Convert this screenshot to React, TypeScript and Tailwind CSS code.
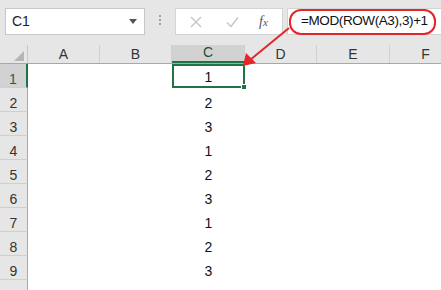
const cols = [
  { key: 'A', w: 'w-[72px]' },
  { key: 'B', w: 'w-[72px]' },
  { key: 'C', w: 'w-[73px]' },
  { key: 'D', w: 'w-[72px]' },
  { key: 'E', w: 'w-[73px]' },
  { key: 'F', w: 'w-[72px]' },
]

const values = [1, 2, 3, 1, 2, 3, 1, 2, 3, null]

function FormulaBar() {
  return (
    <div className="flex h-[45px] items-start bg-[#e6e6e6] pt-[8px]">
      <div className="ml-[5px] flex h-[27px] w-[140px] items-center justify-between border border-[#c6c6c6] bg-white pl-[6px] pr-[7px]">
        <span className="text-[14px] text-[#222]">C1</span>
        <svg width="8" height="5" viewBox="0 0 8 5">
          <path d="M0 0h8L4 5z" fill="#555" />
        </svg>
      </div>
      <div className="ml-[14px] mt-[7px] flex flex-col gap-[2px]">
        <span className="size-[2px] bg-[#a0a0a0]" />
        <span className="size-[2px] bg-[#a0a0a0]" />
        <span className="size-[2px] bg-[#a0a0a0]" />
      </div>
      <div className="ml-[14px] flex h-[27px] w-[108px] items-center border border-[#d4d4d4] bg-white">
        <svg className="ml-[14px]" width="12" height="12" viewBox="0 0 12 12">
          <path d="M1 1l10 10M11 1L1 11" stroke="#c4c4c4" strokeWidth="1.4" />
        </svg>
        <svg className="ml-[24px]" width="13" height="12" viewBox="0 0 13 12">
          <path d="M1 6.5l4 4L12 1.5" stroke="#c4c4c4" strokeWidth="1.4" fill="none" />
        </svg>
        <span className="ml-[20px] font-['Liberation_Serif',serif] text-[14px] italic text-[#555]">
          f<span className="text-[11px]">x</span>
        </span>
      </div>
      <div className="ml-[4px] flex h-[27px] flex-1 items-center border-y border-l border-[#d4d4d4] bg-white pl-[1px]">
        <div className="flex h-[26px] w-[147px] items-center rounded-[12px] border-2 border-[#e3262b] pl-[10px]">
          <span className="text-[13.5px] tracking-[-0.4px] text-[#111]">=MOD(ROW(A3),3)+1</span>
        </div>
      </div>
    </div>
  )
}

function HeaderRow() {
  return (
    <div className="flex h-[19px] border-b border-[#a8a8a8] bg-[#e6e6e6]">
      <div className="relative w-[28px] shrink-0 border-r border-[#c8c8c8]">
        <svg className="absolute bottom-[2px] right-[3px]" width="10" height="10" viewBox="0 0 10 10">
          <path d="M10 0v10H0z" fill="#b5b5b5" />
        </svg>
      </div>
      {cols.map((c) => (
        <div
          key={c.key}
          className={`${c.w} flex shrink-0 items-end justify-center border-r border-[#d0d0d0] pb-[1px] text-[14px] leading-[16px] ${
            c.key === 'C'
              ? 'border-b-2 border-b-[#217346] bg-[#d2d2d2] text-[#1f4f36]'
              : 'text-[#333]'
          }`}
        >
          {c.key}
        </div>
      ))}
    </div>
  )
}

function Row({ n, value }: { n: number; value: number | null }) {
  const active = n === 1
  return (
    <div className="flex h-[24px]">
      <div
        className={`flex w-[28px] shrink-0 items-end justify-center border-b border-[#cfcfcf] pb-[1px] text-[14px] leading-[14px] ${
          active
            ? 'border-r-2 border-r-[#217346] bg-[#d2d2d2] text-[#1f5a5a]'
            : 'border-r border-r-[#a8a8a8] bg-[#e6e6e6] text-[#333]'
        }`}
      >
        {value !== null && n}
      </div>
      {cols.map((c) => (
        <div
          key={c.key}
          className={`${c.w} relative flex shrink-0 items-end justify-center pb-[2px] text-[14px] leading-[14px] text-[#111] ${
            active && c.key === 'C' ? 'border-2 border-[#217346] pb-[1px]' : ''
          }`}
        >
          {c.key === 'C' && value}
          {active && c.key === 'C' && (
            <span className="absolute -bottom-[4px] -right-[4px] size-[6px] border border-white bg-[#217346]" />
          )}
        </div>
      ))}
    </div>
  )
}

export default function App() {
  return (
    <div className="relative h-[290px] w-[441px] overflow-hidden bg-white font-['Liberation_Sans',sans-serif]">
      <FormulaBar />
      <HeaderRow />
      {values.map((v, i) => (
        <Row key={i} n={i + 1} value={v} />
      ))}
      <svg className="pointer-events-none absolute left-0 top-0" width="441" height="290">
        <line x1="289" y1="28" x2="250" y2="60" stroke="#e3262b" strokeWidth="2" />
        <path d="M243 66L246 53L256 63z" fill="#e3262b" />
      </svg>
    </div>
  )
}
